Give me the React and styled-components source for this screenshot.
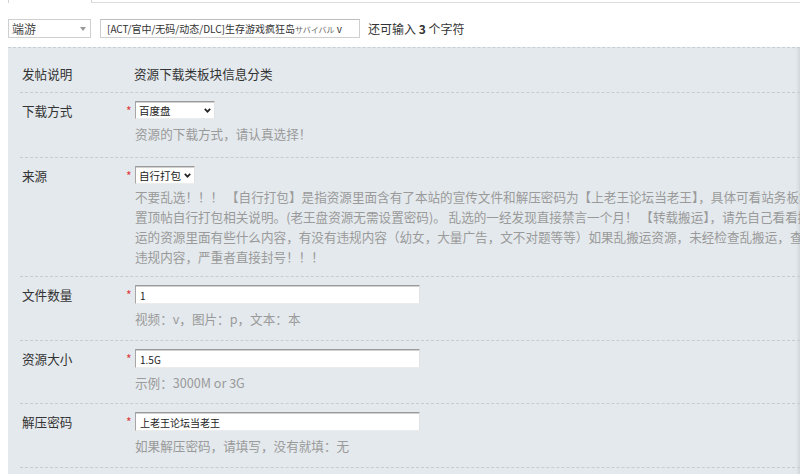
import React from 'react'
import styled, { createGlobalStyle } from 'styled-components'

const GlobalStyle = createGlobalStyle`
  body {
    margin: 0;
    background: #fff;
    font-family: "Noto Sans CJK SC", "Liberation Sans", sans-serif;
    font-size: 12px;
    color: #333;
  }
`

const rows = [
  {
    label: '下载方式',
    select: { value: '百度盘', width: 80 },
    hint: ['资源的下载方式，请认真选择！'],
    pb: 13,
  },
  {
    label: '来源',
    select: { value: '自行打包', width: 60 },
    hint: [
      '不要乱选！！！ 【自行打包】是指资源里面含有了本站的宣传文件和解压密码为【上老王论坛当老王】，具体可看站务板块',
      '置顶帖自行打包相关说明。(老王盘资源无需设置密码)。 乱选的一经发现直接禁言一个月！ 【转载搬运】，请先自己看看搬',
      '运的资源里面有些什么内容，有没有违规内容（幼女，大量广告，文不对题等等）如果乱搬运资源，未经检查乱搬运，查出',
      '违规内容，严重者直接封号！！！',
    ],
    hintGap: 3,
    pb: 9,
  },
  { label: '文件数量', input: '1', hint: ['视频：v，图片：p，文本：本'], pb: 11 },
  { label: '资源大小', input: '1.5G', hint: ['示例：3000M or 3G'], pb: 10 },
  { label: '解压密码', input: '上老王论坛当老王', hint: ['如果解压密码，请填写，没有就填：无'], pb: 11 },
]

const Chevron = () => (
  <ChevronIcon width="7" height="5" viewBox="0 0 7 5">
    <path d="M0.8 0.9 L3.5 3.7 L6.2 0.9" fill="none" stroke="#222" strokeWidth="1.7" />
  </ChevronIcon>
)

const App = () => {
  return (
    <>
      <GlobalStyle />
      <Page>
        <TopEdge>
          <TabStub />
          <TabLine />
        </TopEdge>

        <TitleBar>
          <TypeSelect>
            <span>端游</span>
            <Caret />
          </TypeSelect>
          <TitleField>
            [ACT/官中/无码/动态/DLC]生存游戏疯狂岛<Kana>サバイバル</Kana> v
          </TitleField>
          <Counter>
            还可输入 <strong>3</strong> 个字符
          </Counter>
        </TitleBar>

        <Panel>
          <Row $pt={16} $pb={8}>
            <Label $lh={20}>发帖说明</Label>
            <Star />
            <Value>资源下载类板块信息分类</Value>
          </Row>

          {rows.map((r) => (
            <Row key={r.label} $pt={8} $pb={r.pb}>
              <Label>{r.label}</Label>
              <Star>*</Star>
              <Field>
                {r.select ? (
                  <Select $w={r.select.width}>
                    <span>{r.select.value}</span>
                    <Chevron />
                  </Select>
                ) : (
                  <TextInput readOnly defaultValue={r.input} />
                )}
                <Hint $mt={r.hintGap ?? 5}>
                  {r.hint.map((line) => (
                    <div key={line}>{line}</div>
                  ))}
                </Hint>
              </Field>
            </Row>
          ))}
        </Panel>
      </Page>
    </>
  )
}

export default App

const Page = styled.div`
  width: 800px;
  height: 474px;
  overflow: hidden;
  padding-left: 8px;
  box-sizing: border-box;
`

const TopEdge = styled.div`
  display: flex;
  height: 3px;
`

const TabStub = styled.div`
  width: 82px;
  border-left: 1px solid #d4d4d4;
`

const TabLine = styled.div`
  flex: 1;
  height: 2px;
  border-left: 1px solid #d4d4d4;
  border-bottom: 1px solid #dcdcdc;
`

const TitleBar = styled.div`
  display: flex;
  align-items: center;
  margin-top: 16px;
  height: 19px;
`

const TypeSelect = styled.div`
  display: flex;
  align-items: center;
  justify-content: space-between;
  box-sizing: border-box;
  width: 83px;
  height: 19px;
  padding: 0 4px 0 3px;
  background: #fff;
  border: 1px solid #cfcfcf;
  color: #444;
  font-size: 12px;
`

const Caret = styled.i`
  width: 0;
  height: 0;
  border-left: 3px solid transparent;
  border-right: 3px solid transparent;
  border-top: 4px solid #999;
`

const TitleField = styled.div`
  box-sizing: border-box;
  width: 260px;
  height: 19px;
  margin-left: 9px;
  padding: 0 0 0 6px;
  border: 1px solid #cfcfcf;
  border-top-color: #bdbdbd;
  background: #fff;
  font-size: 10px;
  line-height: 17px;
  color: #333;
  white-space: nowrap;
  overflow: hidden;
`

const Kana = styled.span`
  font-size: 8px;
  color: #666;
`

const Counter = styled.span`
  margin-left: 8px;
  font-size: 12px;
  color: #333;

  strong {
    font-weight: bold;
  }
`

const Panel = styled.div`
  margin-top: 9px;
  padding-left: 12px;
  background: #e4e9ed;
  border-top: 1px dashed #c9ced2;
  box-shadow: inset -4px 0 4px -3px rgba(0, 0, 0, 0.12);
  min-height: 440px;
`

const Row = styled.div`
  display: flex;
  align-items: flex-start;
  padding: ${(p) => p.$pt}px 0 ${(p) => p.$pb}px 2px;
  border-bottom: 1px dashed #c6ccd0;
`

const Label = styled.div`
  width: 102px;
  flex-shrink: 0;
  line-height: ${(p) => p.$lh || 19}px;
  font-size: 12.6px;
  color: #333;
`

const Star = styled.span`
  width: 11px;
  flex-shrink: 0;
  padding-left: 2px;
  box-sizing: border-box;
  line-height: 19px;
  font-size: 12px;
  color: #e03a3a;
`

const Value = styled.div`
  line-height: 20px;
  font-size: 12.6px;
  color: #333;
  margin-left: -1px;
`

const Field = styled.div`
  display: flex;
  flex-direction: column;
  align-items: flex-start;
  min-width: 0;
`

const Select = styled.div`
  display: flex;
  align-items: center;
  justify-content: space-between;
  box-sizing: border-box;
  width: ${(p) => p.$w}px;
  height: 18px;
  padding: 0 3px 0 3px;
  background: #fff;
  border-top: 1px solid #9a9a9a;
  border-left: 1px solid #a6a6a6;
  border-right: 1px solid #e2e2e2;
  border-bottom: 1px solid #ececec;
  box-shadow: inset 0 1px 0 #d0d0d0;
  font-size: 10.5px;
  color: #222;
  white-space: nowrap;
`

const ChevronIcon = styled.svg`
  flex-shrink: 0;
  margin-left: 1px;
`

const TextInput = styled.input`
  box-sizing: border-box;
  width: 285px;
  height: 19px;
  padding: 1px 0 0 4px;
  background: #fff;
  border-top: 1px solid #9a9a9a;
  border-left: 1px solid #a6a6a6;
  border-right: 1px solid #e2e2e2;
  border-bottom: 1px solid #ececec;
  box-shadow: inset 0 1px 0 #d0d0d0;
  font-family: "Noto Sans CJK SC", "Liberation Sans", sans-serif;
  font-size: 10px;
  color: #222;
  outline: none;
`

const Hint = styled.div`
  margin-top: ${(p) => p.$mt}px;
  line-height: 20px;
  font-size: 12.6px;
  color: #9a9a9a;
  white-space: nowrap;
`
